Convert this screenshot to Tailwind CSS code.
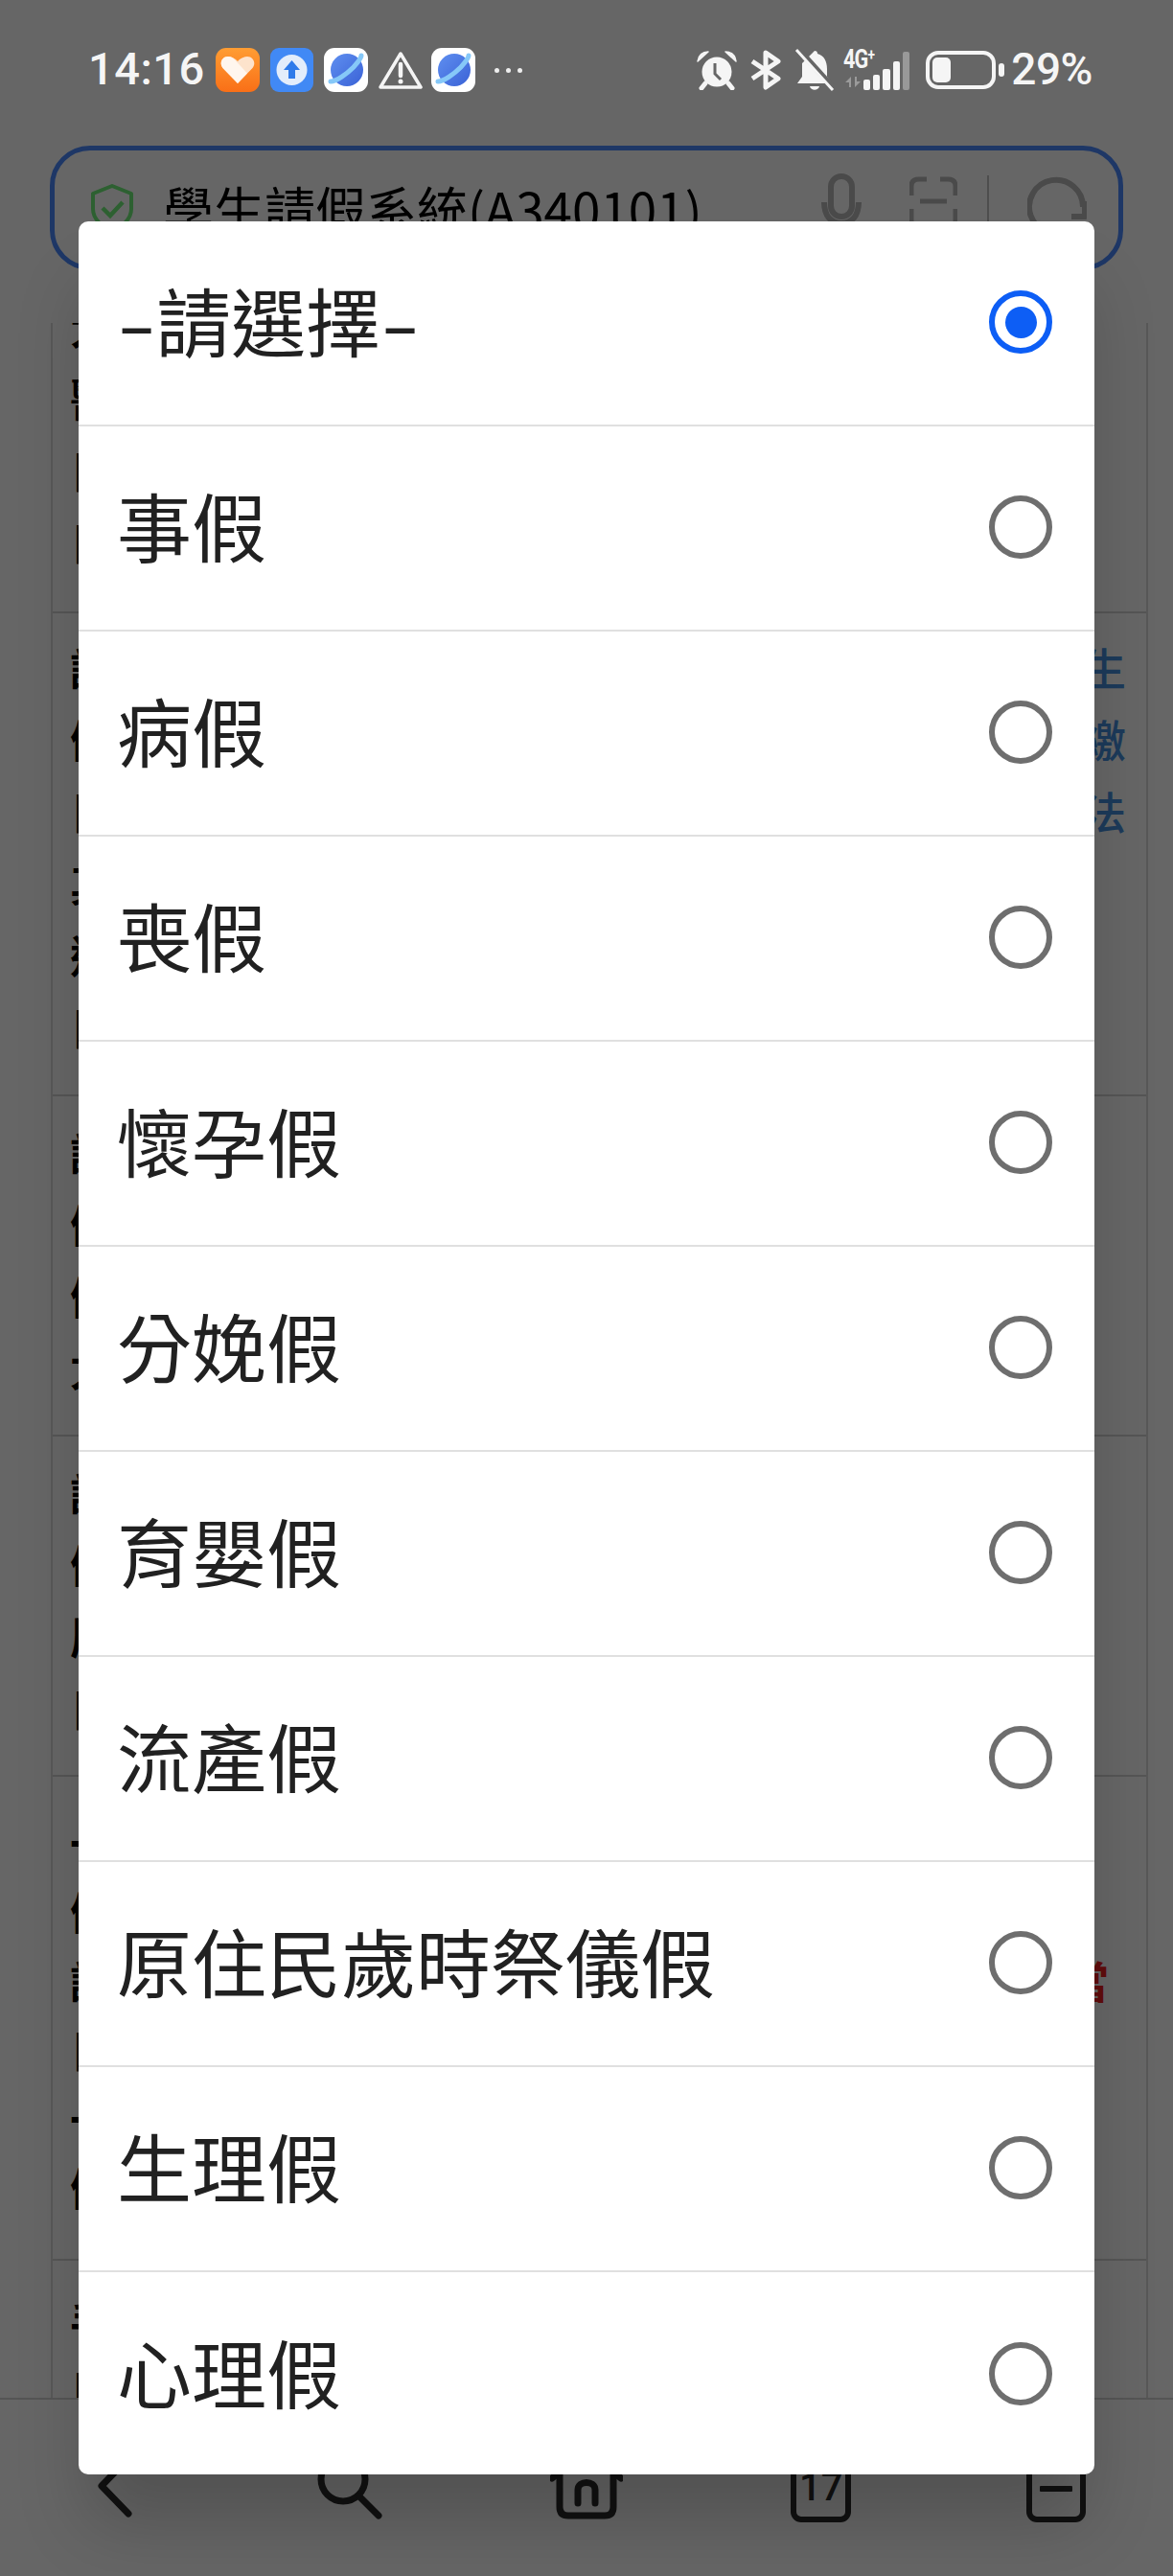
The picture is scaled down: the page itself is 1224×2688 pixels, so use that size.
<!DOCTYPE html>
<html lang="zh-Hant">
<head>
  <meta charset="UTF-8">
  <meta name="viewport" content="width=device-width, initial-scale=1.0">
  <title>學生請假系統</title>
  <script src="https://cdn.jsdelivr.net/npm/@tailwindcss/browser@4"></script>
</head>
<body class="bg-white font-['Noto_Sans_CJK_TC','Noto_Sans',sans-serif]">
<div class="relative w-[1224px] h-[2688px] overflow-hidden bg-white">

  <!-- Status bar -->
  <div class="relative z-20 h-[152px] pl-[92px] pr-[84px] pt-[50px] flex items-start justify-between text-[#f5f5f5]">
    <div class="flex items-center h-[46px]">
      <span class="w-[133px] mb-[3px] font-['Roboto',sans-serif] font-medium text-[47px] leading-[46px] tracking-[0.5px]">14:16</span>
      <svg class="w-[46px] h-[46px]" viewBox="0 0 46 46">
        <defs><linearGradient id="orange" x1="0" y1="0" x2="0" y2="1"><stop offset="0" stop-color="#ff9d33"/><stop offset="1" stop-color="#f96f17"/></linearGradient></defs>
        <rect width="46" height="46" rx="11" fill="url(#orange)"/>
        <path d="M23 37 L7.500 21 C3.500 16 6.500 9 13 9 C17 9 20.500 11 23 14 C25.500 11 29 9 33 9 C39.500 9 42.500 16 38.500 21 Z" fill="#fde3cc"/>
        <path d="M23 37 L7.500 21 C3.500 16 6.500 9 13 9 C16 9 18 10.500 20 12.500 L33 26.500 Z" fill="#fff6ee"/>
      </svg>
      <svg class="ml-[11px] w-[45px] h-[46px]" viewBox="0 0 45 46">
        <rect width="45" height="46" rx="9" fill="#4189f5"/>
        <circle cx="22.500" cy="23" r="16" fill="#e3edfb"/>
        <path d="M22.500 13 L31 23 H26 V32 H19 V23 H14 Z" fill="#2f7bea"/>
      </svg>
      <svg class="ml-[11px] w-[46px] h-[46px]" viewBox="0 0 46 46">
        <defs><linearGradient id="planet" x1="0" y1="0" x2="1" y2="1"><stop offset="0" stop-color="#5f8ff0"/><stop offset="1" stop-color="#3a62d6"/></linearGradient></defs>
        <rect width="46" height="46" rx="11" fill="#fff"/>
        <circle cx="24" cy="23" r="17" fill="url(#planet)"/>
        <path d="M7 35 C13 35 24 27 31 20 C36 14 39 11 39 8" fill="none" stroke="#86c8f8" stroke-width="5" stroke-linecap="round"/>
      </svg>
      <svg class="ml-[11px] w-[46px] h-[40px]" viewBox="0 0 46 40">
        <path d="M23 3 L44 38 H2 Z" fill="none" stroke="#f5f5f5" stroke-width="3.500" stroke-linejoin="round"/>
        <path d="M23 14 V26" stroke="#f5f5f5" stroke-width="4.500" stroke-linecap="round"/>
        <circle cx="23" cy="32" r="2.500" fill="#f5f5f5"/>
      </svg>
      <svg class="ml-[9px] w-[46px] h-[46px]" viewBox="0 0 46 46">
        <rect width="46" height="46" rx="11" fill="#fff"/>
        <circle cx="24" cy="23" r="17" fill="url(#planet)"/>
        <path d="M7 35 C13 35 24 27 31 20 C36 14 39 11 39 8" fill="none" stroke="#86c8f8" stroke-width="5" stroke-linecap="round"/>
      </svg>
      <div class="ml-[20px] flex gap-[7px]">
        <span class="w-[5px] h-[5px] rounded-full bg-[#eeeeee]"></span>
        <span class="w-[5px] h-[5px] rounded-full bg-[#eeeeee]"></span>
        <span class="w-[5px] h-[5px] rounded-full bg-[#eeeeee]"></span>
      </div>
    </div>
    <div class="flex items-center h-[46px]">
      <svg class="w-[42px] h-[42px]" viewBox="0 0 42 42">
        <circle cx="21" cy="23" r="15.500" fill="#f5f5f5"/>
        <path d="M1 12 C2 6 6 2 12 2 Z M41 12 C40 6 36 2 30 2 Z" fill="#f5f5f5" stroke="#f5f5f5" stroke-width="1.500" stroke-linejoin="round"/>
        <path d="M9 35 L5 40 M33 35 L37 40" stroke="#f5f5f5" stroke-width="5" stroke-linecap="round"/>
        <path d="M19 14 V25 L25 31" fill="none" stroke="#666" stroke-width="3"/>
      </svg>
      <svg class="ml-[14px] w-[32px] h-[42px]" viewBox="0 0 32 42">
        <path d="M2 12 L29 30 L16 39 V3 L29 12 L2 30" fill="none" stroke="#f5f5f5" stroke-width="5" stroke-linejoin="round"/>
      </svg>
      <svg class="ml-[14px] w-[42px] h-[46px]" viewBox="0 0 42 46">
        <path d="M21 3 C23 3 24 4 24 6 C31 8 34 14 34 22 V30 L39 37 H3 L8 30 V16 Z" fill="#f5f5f5"/>
        <path d="M16 40 H26 C25 45 17 45 16 40 Z" fill="#f5f5f5"/>
        <path d="M3 0 L41 42" stroke="#666" stroke-width="6"/>
        <path d="M2 2 L40 44" stroke="#f5f5f5" stroke-width="3"/>
      </svg>
      <div class="ml-[9px] relative w-[72px] h-[42px]">
        <span class="absolute left-0 top-[-3px] font-['Roboto',sans-serif] font-bold text-[27px] leading-[27px] tracking-[-1px] scale-x-[0.8] origin-left">4G<sup class="text-[17px] leading-[0]">+</sup></span>
        <svg class="absolute left-0 top-[27px] w-[20px] h-[13px]" viewBox="0 0 20 13"><path d="M2 7 L8 1 V12 H6 V7 Z M18 6 L12 12 V1 H14 V6 Z" fill="#9a9a9a"/></svg>
        <div class="absolute left-[21px] bottom-0 flex items-end gap-[3px]">
          <span class="w-[7px] h-[11px] rounded-[2px] bg-[#f5f5f5]"></span>
          <span class="w-[7px] h-[16px] rounded-[2px] bg-[#f5f5f5]"></span>
          <span class="w-[8px] h-[22px] rounded-[2px] bg-[#f5f5f5]"></span>
          <span class="w-[7px] h-[30px] rounded-[2px] bg-[#f5f5f5]"></span>
          <span class="w-[7px] h-[40px] rounded-[2px] bg-[#999999]"></span>
        </div>
      </div>
      <div class="ml-[14px] w-[73px] h-[40px] rounded-[13px] border-[4px] border-[#f5f5f5] p-[3px]">
        <div class="w-[19px] h-full rounded-[5px] bg-[#f5f5f5]"></div>
      </div>
      <span class="ml-[3px] w-[6px] h-[14px] rounded-[3px] bg-[#f5f5f5]"></span>
      <span class="ml-[7px] mb-[3px] font-['Roboto',sans-serif] font-medium text-[46px] leading-[46px] tracking-[-0.5px]">29%</span>
    </div>
  </div>

  <!-- Address bar -->
  <div class="mx-[52px] h-[130px] rounded-[42px] border-[5px] border-[#4b8aff] flex items-center pl-[37px] pr-[33px]">
    <svg class="w-[46px] h-[52px] shrink-0" viewBox="0 0 46 52" fill="none">
      <path d="M23 3 L43 11 V27 C43 38 33 46 23 50 C13 46 3 38 3 27 V11 Z" stroke="#70f07a" stroke-width="4" stroke-linejoin="round"/>
      <path d="M13 26 L21 34 L34 20" stroke="#70f07a" stroke-width="4.500"/>
    </svg>
    <span class="ml-[30px] text-[53px] leading-none text-black whitespace-nowrap">學生請假系統(A340101)</span>
    <svg class="ml-auto w-[42px] h-[72px] shrink-0" viewBox="0 0 42 72" fill="none" stroke="#b8b8b8" stroke-width="6">
      <rect x="10" y="3" width="22" height="42" rx="11"/>
      <path d="M3 30 C3 44 10 52 21 52 C32 52 39 44 39 30 M21 52 V68"/>
    </svg>
    <svg class="ml-[50px] w-[50px] h-[66px] shrink-0" viewBox="0 0 50 66" fill="none" stroke="#b8b8b8" stroke-width="5">
      <path d="M2 20 V10 C2 5 5 3 10 3 H18 M32 3 H40 C45 3 48 5 48 10 V20 M11 26 H39 M2 34 V48 C2 53 5 55 10 55 H18 M48 34 V48 C48 53 45 55 40 55 H32"/>
    </svg>
    <span class="ml-[31px] w-[2px] h-[68px] bg-[#c4c4c4] shrink-0"></span>
    <svg class="ml-[40px] w-[62px] h-[66px] shrink-0" viewBox="0 0 62 66" fill="none" stroke="#b8b8b8" stroke-width="6">
      <path d="M58 32 A28 28 0 1 0 44 56"/>
      <path d="M60 26 V42 H46" stroke-linejoin="round"/>
    </svg>
  </div>

  <!-- Page behind the dialog -->
  <div class="mt-[55px] ml-[53px] w-[1145px] h-[2165px] overflow-hidden border-x-2 border-[#dddddd] text-[46px] leading-[75px]">
    <div class="flow-root h-[303px] border-b-2 border-[#d4d4d4] px-[18px] font-bold text-black">
      <div class="mt-[-35px]">大<br>醫<br>日<br>日</div>
    </div>
    <div class="h-[504px] border-b-2 border-[#d4d4d4] pl-[18px] pr-[21px] pt-[18px] flex justify-between">
      <div class="font-bold text-black">請<br>假<br>日<br>其<br>送<br>日</div>
      <div class="text-right font-medium text-[#4691e1]">學生<br>繳<br>辦法</div>
    </div>
    <div class="h-[355px] border-b-2 border-[#d4d4d4] px-[18px] pt-[20px] font-bold text-black">請<br>假<br>假<br>尤</div>
    <div class="h-[355px] border-b-2 border-[#d4d4d4] px-[18px] pt-[20px] font-bold text-black">請<br>假<br>屬<br>日</div>
    <div class="h-[505px] border-b-2 border-[#d4d4d4] pl-[18px] pr-[39px] pt-[31px] leading-[72px] flex justify-between font-bold">
      <div class="text-black">一<br>假<br>請<br>日<br>一<br>假</div>
      <div class="pt-[144px] text-[#f02020]">當</div>
    </div>
    <div class="px-[18px] pt-[25px] leading-[72px] font-bold text-black">手<br>日</div>
  </div>

  <!-- Bottom navigation -->
  <div class="absolute left-0 bottom-0 w-full h-[186px] bg-white border-t-2 border-[#d4d4d4] grid grid-cols-5 pt-[52px] text-[#2b2b2b]">
    <div class="flex justify-center">
      <svg class="w-[76px] h-[76px]" viewBox="0 0 76 76" fill="none" stroke="#2b2b2b" stroke-width="7" stroke-linecap="round" stroke-linejoin="round">
        <path d="M51 8 L22 38 L50 67"/>
      </svg>
    </div>
    <div class="flex justify-center">
      <svg class="w-[76px] h-[76px]" viewBox="0 0 76 76" fill="none" stroke="#2b2b2b" stroke-width="7" stroke-linecap="round">
        <circle cx="29" cy="31" r="23"/>
        <path d="M46 49 L66 69"/>
      </svg>
    </div>
    <div class="flex justify-center">
      <svg class="w-[76px] h-[76px]" viewBox="0 0 76 76" fill="none" stroke="#2b2b2b" stroke-width="7" stroke-linecap="round" stroke-linejoin="round">
        <path d="M2 30 L38 2 L74 30"/>
        <path d="M10 24 V60 C10 66 13 69 19 69 H57 C63 69 66 66 66 60 V24"/>
        <path d="M29 56 V42 C29 32 47 32 47 42 V56"/>
      </svg>
    </div>
    <div class="flex justify-center">
      <div class="w-[63px] h-[76px] rounded-[11px] border-[6px] border-[#2b2b2b] flex items-start justify-center">
        <span class="mt-[15px] font-['Roboto',sans-serif] font-medium text-[40px] leading-[38px]">17</span>
      </div>
    </div>
    <div class="flex justify-center">
      <div class="w-[62px] h-[76px] rounded-[11px] border-[6px] border-[#2b2b2b] flex justify-center">
        <span class="mt-[32px] w-[34px] h-[6px] rounded-[1px] bg-[#2b2b2b]"></span>
      </div>
    </div>
  </div>

  <!-- Dim overlay -->
  <div class="absolute inset-0 z-10 bg-black/60"></div>

  <!-- Select dialog -->
  <div class="absolute left-[82px] top-[231px] z-20 w-[1060px] rounded-[10px] bg-white text-[78px] leading-none text-[#212121] shadow-[0_60px_70px_-10px_rgba(0,0,0,0.2)]">
    <div class="h-[214px] pb-[2px] pl-[40px] pr-[44px] border-b-2 border-[#e0e0e0] flex items-center justify-between">
      <span class="mb-[6px] flex items-center"><span class="inline-block w-[41px] text-center scale-x-[1.5]">-</span>請選擇<span class="inline-block w-[41px] text-center scale-x-[1.5]">-</span></span>
      <span class="w-[66px] h-[66px] rounded-full border-[6px] border-[#0d5ef5] flex items-center justify-center"><span class="w-[33px] h-[33px] rounded-full bg-[#0d5ef5]"></span></span>
    </div>
    <div class="h-[214px] pb-[2px] pl-[40px] pr-[44px] border-b-2 border-[#e0e0e0] flex items-center justify-between">
      <span class="mb-[6px]">事假</span>
      <span class="w-[66px] h-[66px] rounded-full border-[6px] border-[#6e6e6e]"></span>
    </div>
    <div class="h-[214px] pb-[2px] pl-[40px] pr-[44px] border-b-2 border-[#e0e0e0] flex items-center justify-between">
      <span class="mb-[6px]">病假</span>
      <span class="w-[66px] h-[66px] rounded-full border-[6px] border-[#6e6e6e]"></span>
    </div>
    <div class="h-[214px] pb-[2px] pl-[40px] pr-[44px] border-b-2 border-[#e0e0e0] flex items-center justify-between">
      <span class="mb-[6px]">喪假</span>
      <span class="w-[66px] h-[66px] rounded-full border-[6px] border-[#6e6e6e]"></span>
    </div>
    <div class="h-[214px] pb-[2px] pl-[40px] pr-[44px] border-b-2 border-[#e0e0e0] flex items-center justify-between">
      <span class="mb-[6px]">懷孕假</span>
      <span class="w-[66px] h-[66px] rounded-full border-[6px] border-[#6e6e6e]"></span>
    </div>
    <div class="h-[214px] pb-[2px] pl-[40px] pr-[44px] border-b-2 border-[#e0e0e0] flex items-center justify-between">
      <span class="mb-[6px]">分娩假</span>
      <span class="w-[66px] h-[66px] rounded-full border-[6px] border-[#6e6e6e]"></span>
    </div>
    <div class="h-[214px] pb-[2px] pl-[40px] pr-[44px] border-b-2 border-[#e0e0e0] flex items-center justify-between">
      <span class="mb-[6px]">育嬰假</span>
      <span class="w-[66px] h-[66px] rounded-full border-[6px] border-[#6e6e6e]"></span>
    </div>
    <div class="h-[214px] pb-[2px] pl-[40px] pr-[44px] border-b-2 border-[#e0e0e0] flex items-center justify-between">
      <span class="mb-[6px]">流產假</span>
      <span class="w-[66px] h-[66px] rounded-full border-[6px] border-[#6e6e6e]"></span>
    </div>
    <div class="h-[214px] pb-[2px] pl-[40px] pr-[44px] border-b-2 border-[#e0e0e0] flex items-center justify-between">
      <span class="mb-[6px]">原住民歲時祭儀假</span>
      <span class="w-[66px] h-[66px] rounded-full border-[6px] border-[#6e6e6e]"></span>
    </div>
    <div class="h-[214px] pb-[2px] pl-[40px] pr-[44px] border-b-2 border-[#e0e0e0] flex items-center justify-between">
      <span class="mb-[6px]">生理假</span>
      <span class="w-[66px] h-[66px] rounded-full border-[6px] border-[#6e6e6e]"></span>
    </div>
    <div class="h-[211px] pl-[40px] pr-[44px] flex items-center justify-between">
      <span class="mb-[6px]">心理假</span>
      <span class="w-[66px] h-[66px] rounded-full border-[6px] border-[#6e6e6e]"></span>
    </div>
  </div>

</div>
</body>
</html>
